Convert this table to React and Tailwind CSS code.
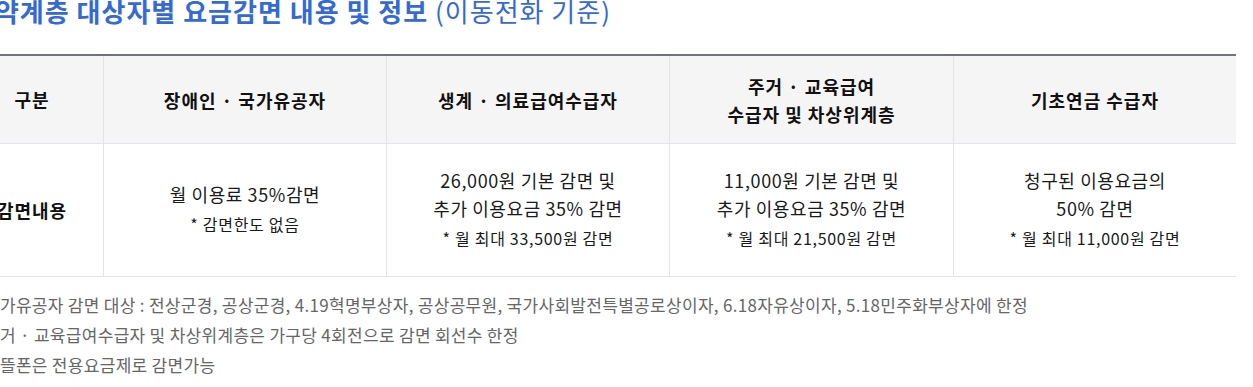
const columns = [
  { head: ['장애인 · 국가유공자'], body: ['월 이용료 35%감면'], note: '* 감면한도 없음' },
  { head: ['생계 · 의료급여수급자'], body: ['26,000원 기본 감면 및', '추가 이용요금 35% 감면'], note: '* 월 최대 33,500원 감면' },
  { head: ['주거 · 교육급여', '수급자 및 차상위계층'], body: ['11,000원 기본 감면 및', '추가 이용요금 35% 감면'], note: '* 월 최대 21,500원 감면' },
  { head: ['기초연금 수급자'], body: ['청구된 이용요금의', '50% 감면'], note: '* 월 최대 11,000원 감면' },
];

const notes = [
  '국가유공자 감면 대상 : 전상군경, 공상군경, 4.19혁명부상자, 공상공무원, 국가사회발전특별공로상이자, 6.18자유상이자, 5.18민주화부상자에 한정',
  '주거 · 교육급여수급자 및 차상위계층은 가구당 4회전으로 감면 회선수 한정',
  '알뜰폰은 전용요금제로 감면가능',
];

const App = () => {
  return (
    <div
      className="w-[1253px] h-[387px] overflow-hidden bg-white"
      style={{ fontFamily: '"Noto Sans CJK KR", "Noto Sans", sans-serif' }}
    >
      <h2 className="ml-[-30px] mt-[-7px] h-[61px] text-[26px] leading-[36px] font-bold text-[#356ad2] whitespace-nowrap tracking-[1px]">
        취약계층 대상자별 요금감면 내용 및 정보 <span className="font-normal">(이동전화 기준)</span>
      </h2>

      <div className="ml-[-39px] w-[1275px] border-t-2 border-[#707378]">
        <div className="grid grid-cols-[142px_283px_283px_284px_283px] h-[88px] bg-[#f5f5f5] border-b border-[#e1e4e8] text-[18px] font-bold text-[#111] tracking-[1px]">
          <div className="flex items-center justify-center">구분</div>
          {columns.map((col, i) => (
            <div key={i} className="flex flex-col items-center justify-center border-l border-[#e1e4e8] leading-[28px]">
              {col.head.map((line) => (
                <span key={line}>{line}</span>
              ))}
            </div>
          ))}
        </div>
        <div className="grid grid-cols-[142px_283px_283px_284px_283px] h-[133px] border-b border-[#e1e4e8] text-[#1a1a1a]">
          <div className="flex items-center justify-center text-[18px] font-bold text-[#111] tracking-[1px]">감면내용</div>
          {columns.map((col, i) => (
            <div key={i} className="flex flex-col items-center justify-center border-l border-[#e1e4e8]">
              {col.body.map((line) => (
                <span key={line} className="text-[18px] leading-[28px] tracking-[0.6px]">{line}</span>
              ))}
              <span className="text-[16px] leading-[32px] tracking-[0.7px]">{col.note}</span>
            </div>
          ))}
        </div>
      </div>

      <ul className="mt-[13px] ml-[-16px] text-[17px] leading-[30px] text-[#666] tracking-[0.3px] whitespace-nowrap">
        {notes.map((n) => (
          <li key={n}>{n}</li>
        ))}
      </ul>
    </div>
  );
};

export default App;
